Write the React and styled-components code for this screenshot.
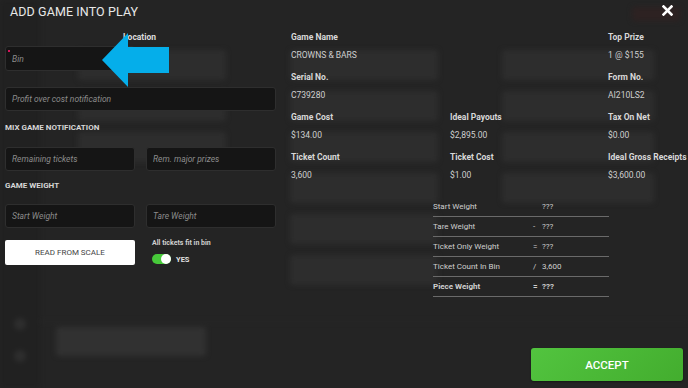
import React from 'react';
import styled, { createGlobalStyle } from 'styled-components';

const Global = createGlobalStyle`
  html, body { margin: 0; padding: 0; background: #252525; }
  body { font-family: Roboto, "Liberation Sans", Arial, sans-serif; }
  #root { width: 688px; height: 388px; }
  * { box-sizing: border-box; }
`;

const Screen = styled.div`
  position: relative;
  width: 688px;
  height: 388px;
  overflow: hidden;
  background: #242424;
`;

/* ---------- blurred app behind the dialog ---------- */
const BgLayer = styled.div`
  display: flex;
  height: 100%;
  filter: blur(2.5px);
`;
const BgSidebar = styled.div`
  width: 40px;
  display: flex;
  flex-direction: column;
  align-items: center;
  justify-content: flex-end;
  gap: 20px;
  padding-bottom: 26px;
  background: #212121;
`;
const BgIcon = styled.div`
  width: 12px;
  height: 12px;
  border-radius: 50%;
  background: #2e2e2e;
`;
const BgMain = styled.div`
  flex: 1;
  display: flex;
  flex-direction: column;
`;
const BgTop = styled.div`
  height: 50px;
  display: flex;
  justify-content: flex-end;
  padding: 7px 8px 0 0;
`;
const BgRedTab = styled.div`
  width: 48px;
  height: 14px;
  border-radius: 3px;
  background: #2d2222;
`;
const BgGrid = styled.div`
  display: grid;
  grid-template-columns: 148px 148px 152px;
  column-gap: 64px;
  row-gap: 11px;
  padding-left: 38px;
  grid-auto-flow: column;
  grid-template-rows: repeat(6, 30px);
`;
const BgBox = styled.div`
  border-radius: 3px;
  background: ${(p) => (p.$on ? '#2d2d2d' : 'transparent')};
`;
const BgDivider = styled.div`
  margin-top: 36px;
  height: 1px;
  background: #2b2b2b;
`;
const BgBottom = styled.div`
  padding: 5px 0 0 16px;
`;
const BgButton = styled.div`
  width: 150px;
  height: 29px;
  border-radius: 3px;
  background: #313131;
`;

/* ---------- dialog ---------- */
const Dialog = styled.div`
  position: absolute;
  inset: 0;
  display: flex;
  flex-direction: column;
  color: #dcdcdc;
`;
const Header = styled.div`
  height: 22px;
  display: flex;
  align-items: center;
  justify-content: space-between;
  padding: 0 15px 0 10px;
`;
const Title = styled.div`
  font-size: 12.5px;
  color: #e8e8e8;
  letter-spacing: 0.1px;
`;
const CloseIcon = styled.svg`
  display: block;
  margin-top: -2px;
`;
const Body = styled.div`
  display: flex;
  gap: 15px;
  padding-left: 5px;
`;
const LeftCol = styled.div`
  width: 271px;
  display: grid;
  grid-template-columns: 130px 130px;
  column-gap: 11px;
  align-content: start;
`;
const FieldLabel = styled.div`
  grid-column: 1 / -1;
  margin-top: 7px;
  padding-left: 118px;
  height: 17px;
  line-height: 16px;
  font-size: 8.5px;
  font-weight: 700;
  color: #dcdcdc;
`;
const InputWrap = styled.div`
  position: relative;
  grid-column: ${(p) => (p.$wide ? '1 / -1' : 'auto')};
  margin-top: ${(p) => p.$mt || 0}px;
`;
const Input = styled.input`
  display: block;
  width: 100%;
  height: ${(p) => p.$h || 24}px;
  background: #151515;
  border: 1px solid #2e2e2e;
  border-radius: 3px;
  padding: 0 6px;
  color: #ddd;
  font-family: Roboto, "Liberation Sans", Arial, sans-serif;
  font-size: 8.5px;
  font-style: italic;
  outline: none;
  &::placeholder { color: #8c8c8c; }
`;
const RequiredDot = styled.span`
  position: absolute;
  left: 3px;
  top: 4px;
  width: 2px;
  height: 2px;
  background: #d4145a;
`;
const Section = styled.div`
  grid-column: 1 / -1;
  margin-top: ${(p) => p.$mt}px;
  height: 14px;
  line-height: 14px;
  font-size: 8px;
  font-weight: 700;
  color: #d6d6d6;
  text-transform: uppercase;
`;
const ScaleButton = styled.button`
  margin-top: 12px;
  height: 25px;
  background: #fff;
  border: none;
  border-radius: 2px;
  color: #444;
  font-family: Roboto, "Liberation Sans", Arial, sans-serif;
  font-size: 8px;
  padding: 0;
`;
const ToggleGroup = styled.div`
  margin-top: 10px;
  padding-left: 6px;
  display: flex;
  flex-direction: column;
  gap: 6px;
`;
const SmallLabel = styled.div`
  font-size: 7px;
  font-weight: 700;
  color: #d0d0d0;
  line-height: 10px;
`;
const ToggleRow = styled.div`
  display: flex;
  align-items: center;
  gap: 5px;
`;
const Track = styled.div`
  width: 19px;
  height: 10px;
  border-radius: 5px;
  background: #47c93a;
  display: flex;
  justify-content: ${(p) => (p.$on ? 'flex-end' : 'flex-start')};
`;
const Knob = styled.div`
  width: 10px;
  height: 10px;
  border-radius: 50%;
  background: #fff;
`;
const YesText = styled.span`
  font-size: 7.5px;
  font-weight: 700;
  color: #e0e0e0;
`;

const RightArea = styled.div`
  display: flex;
  flex-direction: column;
`;
const DataGrid = styled.div`
  margin-top: 7px;
  display: grid;
  grid-template-columns: 159px 158px 80px;
  grid-auto-rows: 34px;
  row-gap: 6px;
`;
const Cell = styled.div`
  display: flex;
  flex-direction: column;
  gap: 2px;
  white-space: nowrap;
`;
const CellLabel = styled.div`
  font-size: 8.5px;
  font-weight: 700;
  line-height: 16px;
  color: #d8d8d8;
`;
const CellValue = styled.div`
  font-size: 8.5px;
  line-height: 16px;
  color: #cfcfcf;
`;
const WeightTable = styled.div`
  margin: 14px 0 0 142px;
  width: 176px;
`;
const WRow = styled.div`
  display: flex;
  height: 20px;
  align-items: center;
  border-bottom: 1.5px solid #6a6a6a;
  font-size: 8px;
  font-weight: ${(p) => (p.$bold ? 700 : 400)};
  color: #cfcfcf;
`;
const WName = styled.span`
  width: 100px;
`;
const WOp = styled.span`
  width: 9px;
`;

const Footer = styled.div`
  margin-top: auto;
  display: flex;
  justify-content: flex-end;
  padding: 0 5px 7px 0;
`;
const AcceptButton = styled.button`
  width: 152px;
  height: 33px;
  border: none;
  border-radius: 3px;
  background: linear-gradient(135deg, #52c43f 0%, #43ad2e 100%);
  color: #fff;
  font-family: Roboto, "Liberation Sans", Arial, sans-serif;
  font-size: 11.5px;
  font-weight: 500;
  box-shadow: 0 1px 2px rgba(0, 0, 0, 0.4);
`;

const Arrow = styled.svg`
  position: absolute;
  left: 102px;
  top: 33px;
`;

const data = [
  ['Game Name', 'CROWNS & BARS'],
  null,
  ['Top Prize', '1 @ $155'],
  ['Serial No.', 'C739280'],
  null,
  ['Form No.', 'AI210LS2'],
  ['Game Cost', '$134.00'],
  ['Ideal Payouts', '$2,895.00'],
  ['Tax On Net', '$0.00'],
  ['Ticket Count', '3,600'],
  ['Ticket Cost', '$1.00'],
  ['Ideal Gross Receipts', '$3,600.00'],
];

const weights = [
  ['Start Weight', '', '???'],
  ['Tare Weight', '-', '???'],
  ['Ticket Only Weight', '=', '???'],
  ['Ticket Count In Bin', '/', '3,600'],
  ['Piece Weight', '=', '???', true],
];

const ghost = [
  [1, 1, 1, 0, 0, 0],
  [1, 1, 1, 1, 1, 1],
  [1, 1, 1, 1, 0, 0],
];

export default function App() {
  return (
    <Screen>
      <Global />
      <BgLayer>
        <BgSidebar>
          <BgIcon />
          <BgIcon />
        </BgSidebar>
        <BgMain>
          <BgTop>
            <BgRedTab />
          </BgTop>
          <BgGrid>
            {ghost.flatMap((col, c) =>
              col.map((on, r) => <BgBox key={`${c}-${r}`} $on={!!on} />)
            )}
          </BgGrid>
          <BgDivider />
          <BgBottom>
            <BgButton />
          </BgBottom>
        </BgMain>
      </BgLayer>

      <Dialog>
        <Header>
          <Title>ADD GAME INTO PLAY</Title>
          <CloseIcon width="11" height="11" viewBox="0 0 11 11">
            <path d="M1.5 1.5 L9.5 9.5 M9.5 1.5 L1.5 9.5" stroke="#fff" strokeWidth="2.6" strokeLinecap="square" />
          </CloseIcon>
        </Header>
        <Body>
          <LeftCol>
            <FieldLabel>Location</FieldLabel>
            <InputWrap>
              <Input placeholder="Bin" $h={25} />
              <RequiredDot />
            </InputWrap>
            <div />
            <InputWrap $wide $mt={16}>
              <Input placeholder="Profit over cost notification" />
            </InputWrap>
            <Section $mt={10}>Mix game notification</Section>
            <InputWrap $mt={12}>
              <Input placeholder="Remaining tickets" />
            </InputWrap>
            <InputWrap $mt={12}>
              <Input placeholder="Rem. major prizes" />
            </InputWrap>
            <Section $mt={8}>Game weight</Section>
            <InputWrap $mt={11}>
              <Input placeholder="Start Weight" />
            </InputWrap>
            <InputWrap $mt={11}>
              <Input placeholder="Tare Weight" />
            </InputWrap>
            <ScaleButton>READ FROM SCALE</ScaleButton>
            <ToggleGroup>
              <SmallLabel>All tickets fit in bin</SmallLabel>
              <ToggleRow>
                <Track $on>
                  <Knob />
                </Track>
                <YesText>YES</YesText>
              </ToggleRow>
            </ToggleGroup>
          </LeftCol>
          <RightArea>
            <DataGrid>
              {data.map((d, i) =>
                d ? (
                  <Cell key={i}>
                    <CellLabel>{d[0]}</CellLabel>
                    <CellValue>{d[1]}</CellValue>
                  </Cell>
                ) : (
                  <Cell key={i} />
                )
              )}
            </DataGrid>
            <WeightTable>
              {weights.map(([name, op, val, bold]) => (
                <WRow key={name} $bold={bold}>
                  <WName>{name}</WName>
                  <WOp>{op}</WOp>
                  <span>{val}</span>
                </WRow>
              ))}
            </WeightTable>
          </RightArea>
        </Body>
        <Footer>
          <AcceptButton>ACCEPT</AcceptButton>
        </Footer>
      </Dialog>

      <Arrow width="68" height="54" viewBox="0 0 68 54">
        <polygon points="0,27 26,0 26,14 67,14 67,40 26,40 26,54" fill="#05aeea" />
      </Arrow>
    </Screen>
  );
}
